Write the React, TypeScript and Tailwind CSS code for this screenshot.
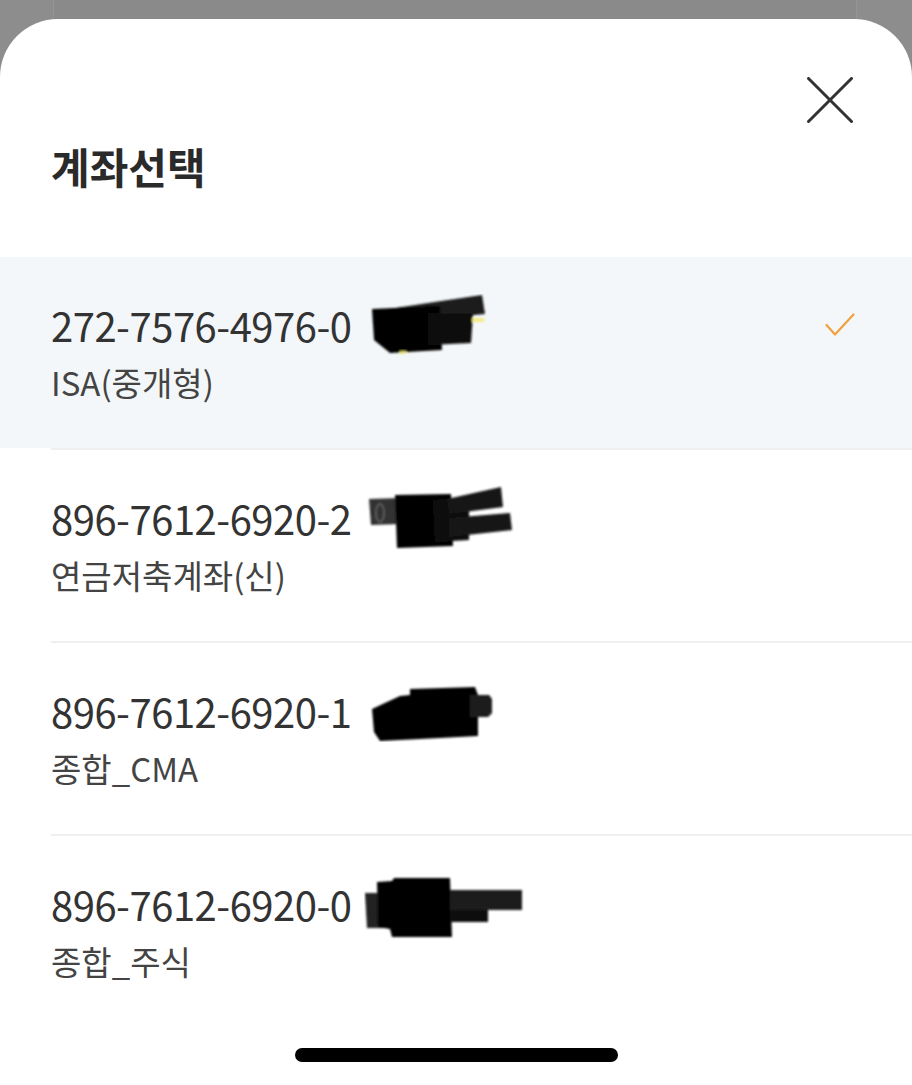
import React from "react";

type Account = {
  number: string;
  name: string;
  selected?: boolean;
  mark: React.ReactNode;
};

const font = { fontFamily: '"Noto Sans CJK KR", "Noto Sans", sans-serif' };

function Blot({ children, w, h, className }: { children: React.ReactNode; w: number; h: number; className: string }) {
  return (
    <svg width={w} height={h} viewBox={`0 0 ${w} ${h}`} className={`absolute ${className}`}>
      <defs>
        <filter id="soft" x="-10%" y="-10%" width="120%" height="120%">
          <feGaussianBlur stdDeviation="1.1" />
        </filter>
      </defs>
      <g filter="url(#soft)">{children}</g>
    </svg>
  );
}

const accounts: Account[] = [
  {
    number: "272-7576-4976-0",
    name: "ISA(중개형)",
    selected: true,
    mark: (
      <Blot w={122} h={62} className="left-[368px] top-[37px]">
        <polygon points="8,17 60,9 114,1 117,20 62,25 10,29" fill="#1a1a1a" />
        <polygon points="4,15 72,12 74,56 22,59 6,46" fill="#050505" />
        <polygon points="60,19 105,20 103,49 60,51" fill="#111" />
        <rect x="104" y="24" width="12" height="4" fill="#f1ea6a" opacity="0.8" />
        <rect x="32" y="57" width="6" height="3" fill="#f1ea6a" opacity="0.8" />
      </Blot>
    ),
  },
  {
    number: "896-7612-6920-2",
    name: "연금저축계좌(신)",
    mark: (
      <Blot w={150} h={68} className="left-[367px] top-[34px]">
        <polygon points="2,15 34,14 34,40 4,41" fill="#303030" />
        <polygon points="28,11 84,10 86,62 30,64" fill="#050505" />
        <polygon points="66,16 102,14 102,56 68,58" fill="#0d0d0d" />
        <polygon points="80,15 134,3 136,23 82,30" fill="#161616" />
        <polygon points="82,34 143,29 145,46 82,53" fill="#161616" />
        <ellipse cx="13" cy="29" rx="4" ry="9" fill="none" stroke="#5a5a5a" strokeWidth="2" />
      </Blot>
    ),
  },
  {
    number: "896-7612-6920-1",
    name: "종합_CMA",
    mark: (
      <Blot w={124} h={58} className="left-[370px] top-[41px]">
        <polygon points="2,25 30,12 40,11 40,5 105,3 108,11 108,52 50,55 10,57 4,48" fill="#050505" />
        <polygon points="100,11 119,11 122,15 122,29 118,33 100,33" fill="#1a1a1a" />
      </Blot>
    ),
  },
  {
    number: "896-7612-6920-0",
    name: "종합_주식",
    mark: (
      <Blot w={160} h={66} className="left-[364px] top-[40px]">
        <polygon points="1,17 20,17 20,52 3,52" fill="#222" />
        <polygon points="13,6 28,5 30,2 86,2 88,61 28,61 26,53 14,51" fill="#050505" />
        <polygon points="86,22 124,22 124,46 86,46" fill="#0b0b0b" />
        <polygon points="86,14 158,14 158,34 86,34" fill="#1a1a1a" />
      </Blot>
    ),
  },
];

export default function App() {
  return (
    <div className="w-[912px] h-[1085px] bg-[#8d8d8d] pt-[19px] overflow-hidden relative" style={font}>
      {/* dimmed page behind the sheet */}
      <div className="absolute top-0 left-[53px] right-[55px] h-[40px] bg-[#8a8a8a] border-x border-[#959595]" />

      <div className="relative h-full bg-white rounded-t-[58px] flex flex-col">
        {/* Header */}
        <div className="h-[238px] flex flex-col">
          <div className="mt-[58px] h-[46px] flex justify-end pr-[59px]">
            <button aria-label="닫기" className="w-[46px] h-[46px]">
              <svg width="46" height="46" viewBox="0 0 46 46">
                <line x1="1.5" y1="1.5" x2="44.5" y2="44.5" stroke="#333" strokeWidth="3" strokeLinecap="round" />
                <line x1="44.5" y1="1.5" x2="1.5" y2="44.5" stroke="#333" strokeWidth="3" strokeLinecap="round" />
              </svg>
            </button>
          </div>
          <div className="mt-[18px] h-[50px] flex items-center px-[51px]">
            <h1 className="text-[42px] font-bold text-[#2a2a2a] leading-none">계좌선택</h1>
          </div>
        </div>

        {/* Account list */}
        <ul className="flex flex-col">
          {accounts.map((a, i) => (
            <li key={a.number} className="flex flex-col">
              <div className={`relative h-[191px] pl-[51px] pr-[57px] pt-[43px] ${a.selected ? "bg-[#f4f7f9]" : "bg-white"}`}>
                <div className="h-[50px] flex items-center justify-between">
                  <span className="text-[40px] text-[#333] tracking-[-0.5px] leading-none">{a.number}</span>
                  {a.selected && (
                    <svg width="30" height="24" viewBox="0 0 30 24">
                      <polyline points="1.5,12 10,21.5 28.5,1.5" fill="none" stroke="#f0a03c" strokeWidth="2.2" strokeLinecap="round" strokeLinejoin="round" />
                    </svg>
                  )}
                </div>
                <div className="mt-[10px] h-[44px] flex items-center">
                  <span className="text-[33px] text-[#444] leading-none">{a.name}</span>
                </div>
                {a.mark}
              </div>
              {i < accounts.length - 1 && <div className="ml-[51px] h-[2px] bg-[#efefef]" />}
            </li>
          ))}
        </ul>

        {/* Home indicator */}
        <div className="mt-auto mb-[23px] flex justify-center">
          <div className="w-[323px] h-[14px] rounded-full bg-black" />
        </div>
      </div>
    </div>
  );
}
